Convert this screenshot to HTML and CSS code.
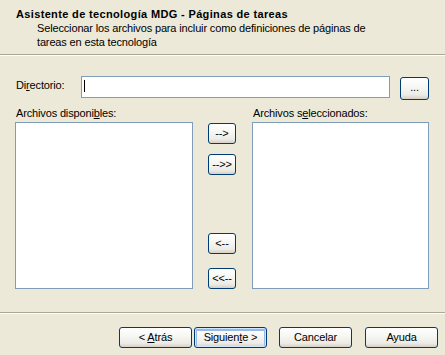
FILE: index.html
```html
<!DOCTYPE html>
<html>
<head>
<meta charset="utf-8">
<link rel="stylesheet" href="styles.css">
</head>
<body>
<div class="dialog">
  <div class="header">
    <div class="title">Asistente de tecnología MDG - Páginas de tareas</div>
    <div class="subtitle">Seleccionar los archivos para incluir como definiciones de páginas de<br>tareas en esta tecnología</div>
  </div>
  <div class="content">
    <div class="dir-row">
      <label class="dir-label">Di<u>r</u>ectorio:</label>
      <div class="input"><span class="caret"></span></div>
      <button class="btn browse">...</button>
    </div>
    <div class="lists">
      <div class="list-label left-label">Archivos disponi<u>b</u>les:</div>
      <div class="list-label right-label">Archivos s<u>e</u>leccionados:</div>
      <div class="listbox"></div>
      <div class="movers">
        <button class="btn mover m1">--&gt;</button>
        <button class="btn mover m2">--&gt;&gt;</button>
        <button class="btn mover m3">&lt;--</button>
        <button class="btn mover m4">&lt;&lt;--</button>
      </div>
      <div class="listbox"></div>
    </div>
  </div>
  <div class="footer">
    <button class="btn wiz"><span>&lt; <u>A</u>trás</span></button>
    <button class="btn wiz default"><span>Siguien<u>t</u>e &gt;</span></button>
    <button class="btn wiz cancel">Cancelar</button>
    <button class="btn wiz">Ayuda</button>
  </div>
</div>
</body>
</html>
```

FILE: styles.css
```css
html, body {
  margin: 0;
  padding: 0;
  background: #ECE9D8;
}
body {
  width: 445px;
  height: 355px;
  overflow: hidden;
  font-family: "Liberation Sans", Arial, sans-serif;
  font-size: 11px;
  line-height: 14px;
  letter-spacing: -0.15px;
  color: #000;
}
.dialog {
  display: flex;
  flex-direction: column;
  height: 355px;
}
.header {
  height: 55px;
  box-sizing: border-box;
  padding: 7px 0 0 16px;
  border-bottom: 1px solid #ACA899;
  box-shadow: 0 1px 0 #FFFFFF;
}
.title {
  font-weight: bold;
  letter-spacing: 0.35px;
}
.subtitle {
  padding-left: 21px;
}
.content {
  padding: 21px 0 0 15px;
}
.dir-row {
  display: grid;
  grid-template-columns: 66px 309px 29px;
  column-gap: 0;
  align-items: start;
}
.dir-label {
  padding: 2px 0 0 1px;
}
.input {
  height: 22px;
  box-sizing: border-box;
  background: #fff;
  border: 1px solid #7F9DB9;
  position: relative;
}
.caret {
  position: absolute;
  left: 2px;
  top: 3px;
  width: 1px;
  height: 12px;
  background: #000;
}
.btn {
  font-family: inherit;
  font-size: 11px;
  line-height: 13px;
  letter-spacing: inherit;
  color: #000;
  padding: 0;
  margin: 0;
  box-sizing: border-box;
  border: 1px solid #003C74;
  border-radius: 3px;
  background: linear-gradient(to bottom, #FFFFFF 0%, #F7F7F4 40%, #ECEBE6 80%, #D6D0C5 100%);
  display: flex;
  align-items: center;
  justify-content: center;
}
.browse {
  height: 23px;
  width: 29px;
  margin: 1px 0 0 10px;
  padding-bottom: 2px;
}
.lists {
  display: grid;
  grid-template-columns: 178px 59px 177px;
  grid-template-rows: 14px 167px;
  row-gap: 2px;
  margin-top: 6px;
}
.list-label {
  padding-left: 1px;
}
.left-label { grid-column: 1; grid-row: 1; }
.right-label { grid-column: 3; grid-row: 1; }
.listbox {
  grid-row: 2;
  background: #fff;
  border: 1px solid #7F9DB9;
  box-sizing: border-box;
}
.movers {
  grid-row: 2;
  grid-column: 2;
  display: flex;
  flex-direction: column;
  padding-left: 15px;
}
.mover {
  width: 28px;
  height: 21px;
}
.m1 { margin-top: 1px; }
.m2 { margin-top: 10px; }
.m3 { margin-top: 58px; }
.m4 { margin-top: 14px; }
.footer {
  margin-top: 23px;
  border-top: 1px solid #ACA899;
  box-shadow: inset 0 1px 0 #FFFFFF;
  padding: 14px 0 0 119px;
  display: flex;
}
.wiz {
  width: 73px;
  height: 21px;
}
.default {
  margin-left: 2px;
  box-shadow: inset 0 0 0 1px #CEE7FF, inset 0 1px 0 2px #98B8EA;
}
.cancel {
  margin-left: 12px;
  margin-right: 13px;
}
```
